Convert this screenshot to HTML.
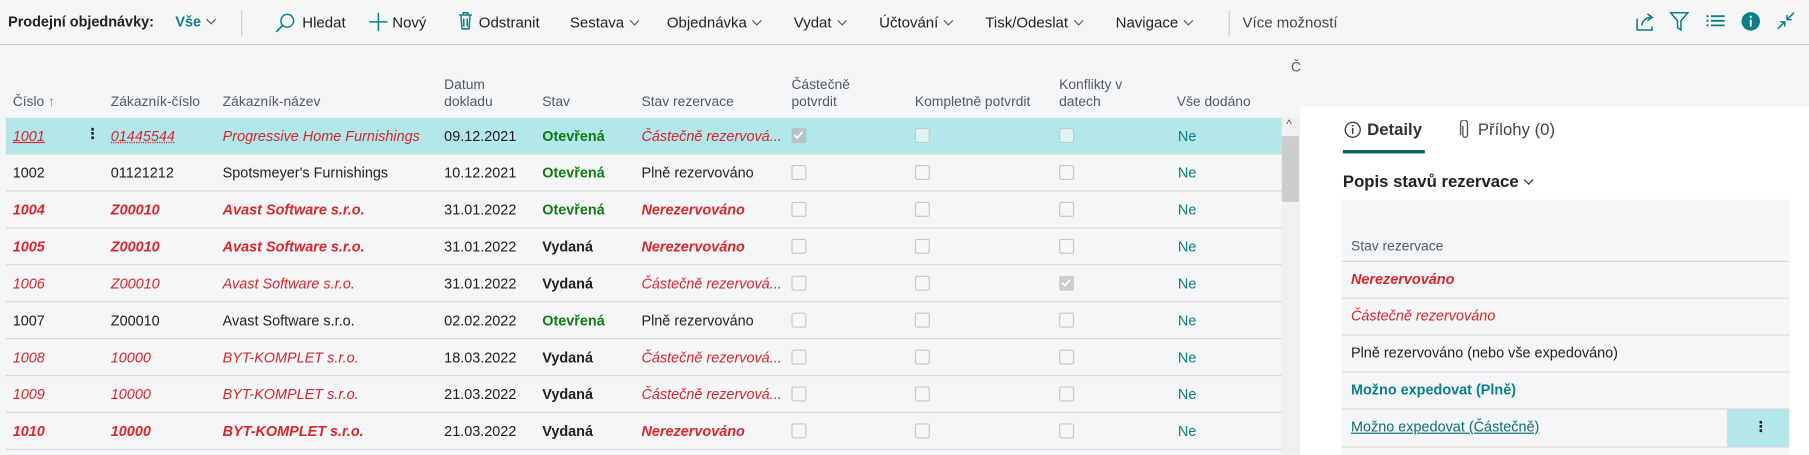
<!DOCTYPE html>
<html><head><meta charset="utf-8">
<style>
*{margin:0;padding:0;box-sizing:border-box}
html,body{width:1809px;height:455px;overflow:hidden;background:#f5f6f8}
#w{position:absolute;left:0;top:0;width:1568px;height:394px;transform:scale(1.15370);transform-origin:0 0;font-family:"Liberation Sans","DejaVu Sans",sans-serif;font-size:12.5px;color:#212121}
.a{position:absolute;white-space:nowrap}
.tb{font-size:13px;color:#212121}
.chev{display:inline-block;width:6px;height:6px;border-right:1px solid #555;border-bottom:1px solid #555;transform:rotate(45deg);margin-left:6px;position:relative;top:-3px}
.hd{font-size:12px;color:#505a66;line-height:15px}
.row{position:absolute;left:5px;width:1106px;height:32px;border-bottom:1px solid #d7dade}
.row .a{top:9px}
.cb{position:absolute;width:13px;height:13px;border:1.3px solid #c8c8c8;border-radius:2px;top:9px;background:#f7f7f7}
.r{color:#d9262c}
.i{font-style:italic}
.b{font-weight:bold}
.g{color:#107c10;font-weight:bold}
.ne{color:#0a7f86}
</style></head><body><div id="w">
<div class="a" style="left:0;top:0;width:1568px;height:39px;border-bottom:1px solid #c8ccd2;background:#f5f6f8"></div>
<div class="a tb b" style="left:7px;top:12px;font-size:12.5px">Prodejní objednávky:</div>
<div class="a tb" style="left:152px;top:12px;color:#0a7f86;font-weight:bold;font-size:12.5px">Vše<span class="chev"></span></div>
<div class="a" style="left:209px;top:9px;width:1px;height:22px;background:#c8ccd2"></div>
<svg class="a" style="left:238px;top:11px" width="18" height="18"><circle cx="11" cy="7" r="5.5" fill="none" stroke="#0a7f86" stroke-width="1.3"/><line x1="7" y1="11" x2="1.5" y2="16.5" stroke="#0a7f86" stroke-width="1.5"/></svg>
<div class="a tb" style="left:262px;top:12px">Hledat</div>
<svg class="a" style="left:320px;top:11px" width="16" height="16"><path d="M8 0v16M0 8h16" stroke="#0a7f86" stroke-width="1.3"/></svg>
<div class="a tb" style="left:340px;top:12px">Nový</div>
<svg class="a" style="left:397px;top:10px" width="13" height="16"><path d="M1 3h11M4.5 3V1h4v2M2.5 3l1 12h6l1-12M5 6v7M8 6v7" stroke="#0a7f86" stroke-width="1.3" fill="none"/></svg>
<div class="a tb" style="left:415px;top:12px">Odstranit</div>
<div class="a tb" style="left:494px;top:12px">Sestava<span class="chev"></span></div>
<div class="a tb" style="left:578px;top:12px">Objednávka<span class="chev"></span></div>
<div class="a tb" style="left:688px;top:12px">Vydat<span class="chev"></span></div>
<div class="a tb" style="left:762px;top:12px">Účtování<span class="chev"></span></div>
<div class="a tb" style="left:854px;top:12px">Tisk/Odeslat<span class="chev"></span></div>
<div class="a tb" style="left:967px;top:12px">Navigace<span class="chev"></span></div>
<div class="a" style="left:1065px;top:9px;width:1px;height:22px;background:#c8ccd2"></div>
<div class="a tb" style="left:1077px;top:12px;color:#444">Více možností</div>
<svg class="a" style="left:1417px;top:10px" width="18" height="18"><path d="M2 6v10h13v-3M6 12c1-5 4-7 9-7M11 2l4 3-4 3" stroke="#0a7f86" stroke-width="1.3" fill="none"/></svg>
<svg class="a" style="left:1447px;top:10px" width="17" height="18"><path d="M1 1h15l-6 7v8l-3-2V8z" stroke="#0a7f86" stroke-width="1.3" fill="none"/></svg>
<svg class="a" style="left:1479px;top:12px" width="16" height="14"><path d="M0 2h2M4 2h12M0 6h2M4 6h12M0 10h2M4 10h12" stroke="#0a7f86" stroke-width="1.6"/></svg>
<svg class="a" style="left:1509px;top:10px" width="17" height="17"><circle cx="8.5" cy="8.5" r="8" fill="#0a7f86"/><path d="M8.5 7v6" stroke="#fff" stroke-width="1.6"/><circle cx="8.5" cy="4.5" r="1" fill="#fff"/></svg>
<svg class="a" style="left:1540px;top:10px" width="16" height="16"><path d="M1 15l6-6M3 9h4v4M15 1l-6 6M9 3v4h4" stroke="#0a7f86" stroke-width="1.3" fill="none"/></svg>

<div class="a hd" style="left:11px;top:81px">Číslo <span style="color:#888">↑</span></div>
<div class="a hd" style="left:96px;top:81px">Zákazník-číslo</div>
<div class="a hd" style="left:193px;top:81px">Zákazník-název</div>
<div class="a hd" style="left:385px;top:66px">Datum<br>dokladu</div>
<div class="a hd" style="left:470px;top:81px">Stav</div>
<div class="a hd" style="left:556px;top:81px">Stav rezervace</div>
<div class="a hd" style="left:686px;top:66px">Částečně<br>potvrdit</div>
<div class="a hd" style="left:793px;top:81px">Kompletně potvrdit</div>
<div class="a hd" style="left:918px;top:66px">Konflikty v<br>datech</div>
<div class="a hd" style="left:1020px;top:81px">Vše dodáno</div>
<div class="a hd" style="left:1119px;top:51px">Č</div>

<div class="row" style="top:102px;background:#b2e8ea"><div class="a r i" style="left:6px;text-decoration:underline">1001</div><div class="a b" style="left:69px;top:6px">⋮</div><div class="a r i" style="left:91px;text-decoration:underline dotted">01445544</div><div class="a r i" style="left:188px">Progressive Home Furnishings</div><div class="a" style="left:380px">09.12.2021</div><div class="a g" style="left:465px">Otevřená</div><div class="a r i" style="left:551px">Částečně rezervová...</div><div class="cb" style="left:681px;background:#b8c4c6;border-color:#b8c4c6"><svg width="10" height="10" style="position:absolute;left:0;top:0"><path d="M1.5 5l2.5 2.5 4.5-5" stroke="#fff" stroke-width="1.5" fill="none"/></svg></div><div class="cb" style="left:788px;background:#ddf4f5"></div><div class="cb" style="left:913px;background:#ddf4f5"></div><div class="a ne" style="left:1016px">Ne</div></div>
<div class="row" style="top:134px"><div class="a" style="left:6px">1002</div><div class="a" style="left:91px">01121212</div><div class="a" style="left:188px">Spotsmeyer's Furnishings</div><div class="a" style="left:380px">10.12.2021</div><div class="a g" style="left:465px">Otevřená</div><div class="a" style="left:551px">Plně rezervováno</div><div class="cb" style="left:681px"></div><div class="cb" style="left:788px"></div><div class="cb" style="left:913px"></div><div class="a ne" style="left:1016px">Ne</div></div>
<div class="row" style="top:166px"><div class="a r i b" style="left:6px">1004</div><div class="a r i b" style="left:91px">Z00010</div><div class="a r i b" style="left:188px">Avast Software s.r.o.</div><div class="a" style="left:380px">31.01.2022</div><div class="a g" style="left:465px">Otevřená</div><div class="a r i b" style="left:551px">Nerezervováno</div><div class="cb" style="left:681px"></div><div class="cb" style="left:788px"></div><div class="cb" style="left:913px"></div><div class="a ne" style="left:1016px">Ne</div></div>
<div class="row" style="top:198px"><div class="a r i b" style="left:6px">1005</div><div class="a r i b" style="left:91px">Z00010</div><div class="a r i b" style="left:188px">Avast Software s.r.o.</div><div class="a" style="left:380px">31.01.2022</div><div class="a b" style="left:465px">Vydaná</div><div class="a r i b" style="left:551px">Nerezervováno</div><div class="cb" style="left:681px"></div><div class="cb" style="left:788px"></div><div class="cb" style="left:913px"></div><div class="a ne" style="left:1016px">Ne</div></div>
<div class="row" style="top:230px"><div class="a r i" style="left:6px">1006</div><div class="a r i" style="left:91px">Z00010</div><div class="a r i" style="left:188px">Avast Software s.r.o.</div><div class="a" style="left:380px">31.01.2022</div><div class="a b" style="left:465px">Vydaná</div><div class="a r i" style="left:551px">Částečně rezervová...</div><div class="cb" style="left:681px"></div><div class="cb" style="left:788px"></div><div class="cb" style="left:913px;background:#ccc;border-color:#ccc"><svg width="10" height="10" style="position:absolute;left:0;top:0"><path d="M1.5 5l2.5 2.5 4.5-5" stroke="#fff" stroke-width="1.5" fill="none"/></svg></div><div class="a ne" style="left:1016px">Ne</div></div>
<div class="row" style="top:262px"><div class="a" style="left:6px">1007</div><div class="a" style="left:91px">Z00010</div><div class="a" style="left:188px">Avast Software s.r.o.</div><div class="a" style="left:380px">02.02.2022</div><div class="a g" style="left:465px">Otevřená</div><div class="a" style="left:551px">Plně rezervováno</div><div class="cb" style="left:681px"></div><div class="cb" style="left:788px"></div><div class="cb" style="left:913px"></div><div class="a ne" style="left:1016px">Ne</div></div>
<div class="row" style="top:294px"><div class="a r i" style="left:6px">1008</div><div class="a r i" style="left:91px">10000</div><div class="a r i" style="left:188px">BYT-KOMPLET s.r.o.</div><div class="a" style="left:380px">18.03.2022</div><div class="a b" style="left:465px">Vydaná</div><div class="a r i" style="left:551px">Částečně rezervová...</div><div class="cb" style="left:681px"></div><div class="cb" style="left:788px"></div><div class="cb" style="left:913px"></div><div class="a ne" style="left:1016px">Ne</div></div>
<div class="row" style="top:326px"><div class="a r i" style="left:6px">1009</div><div class="a r i" style="left:91px">10000</div><div class="a r i" style="left:188px">BYT-KOMPLET s.r.o.</div><div class="a" style="left:380px">21.03.2022</div><div class="a b" style="left:465px">Vydaná</div><div class="a r i" style="left:551px">Částečně rezervová...</div><div class="cb" style="left:681px"></div><div class="cb" style="left:788px"></div><div class="cb" style="left:913px"></div><div class="a ne" style="left:1016px">Ne</div></div>
<div class="row" style="top:358px"><div class="a r i b" style="left:6px">1010</div><div class="a r i b" style="left:91px">10000</div><div class="a r i b" style="left:188px">BYT-KOMPLET s.r.o.</div><div class="a" style="left:380px">21.03.2022</div><div class="a b" style="left:465px">Vydaná</div><div class="a r i b" style="left:551px">Nerezervováno</div><div class="cb" style="left:681px"></div><div class="cb" style="left:788px"></div><div class="cb" style="left:913px"></div><div class="a ne" style="left:1016px">Ne</div></div>

<div class="a" style="left:1111px;top:102px;width:15px;height:292px;background:#f0f0f0"></div>
<div class="a" style="left:1111px;top:118px;width:15px;height:57px;background:#cdcdcd"></div>
<div class="a" style="left:1115px;top:103px;font-size:10px;color:#555">^</div>

<div class="a" style="left:1127px;top:92px;width:441px;height:302px;background:#fff"></div>
<svg class="a" style="left:1165px;top:105px" width="15" height="15"><circle cx="7.5" cy="7.5" r="6.5" fill="none" stroke="#333" stroke-width="1.1"/><path d="M7.5 6v5" stroke="#333" stroke-width="1.2"/><circle cx="7.5" cy="4" r=".8" fill="#333"/></svg>
<div class="a b" style="left:1185px;top:105px;font-size:14.5px;color:#333">Detaily</div>
<div class="a" style="left:1164px;top:130px;width:71px;height:3px;background:#0a6268"></div>
<svg class="a" style="left:1265px;top:104px" width="10" height="17"><path d="M3 5v8a2 2 0 0 0 4 0V3a3 3 0 0 0-6 0v10" stroke="#555" stroke-width="1.2" fill="none"/></svg>
<div class="a" style="left:1281px;top:105px;font-size:14.5px;color:#444">Přílohy (0)</div>
<div class="a b" style="left:1164px;top:150px;font-size:14.5px;color:#222">Popis stavů rezervace<span class="chev" style="border-color:#333"></span></div>
<div class="a" style="left:1163px;top:173px;width:388px;height:221px;background:#f5f6f8"></div>
<div class="a hd" style="left:1171px;top:206px">Stav rezervace</div>
<div class="a" style="left:1163px;top:226px;width:388px;height:1px;background:#d7dade"></div>
<div class="a r i b" style="left:1171px;top:235px">Nerezervováno</div>
<div class="a" style="left:1163px;top:258px;width:388px;height:1px;background:#d7dade"></div>
<div class="a r i" style="left:1171px;top:267px">Částečně rezervováno</div>
<div class="a" style="left:1163px;top:290px;width:388px;height:1px;background:#d7dade"></div>
<div class="a" style="left:1171px;top:299px">Plně rezervováno (nebo vše expedováno)</div>
<div class="a" style="left:1163px;top:322px;width:388px;height:1px;background:#d7dade"></div>
<div class="a b" style="left:1171px;top:331px;color:#0a7f86">Možno expedovat (Plně)</div>
<div class="a" style="left:1163px;top:354px;width:388px;height:1px;background:#d7dade"></div>
<div class="a" style="left:1171px;top:363px;color:#0a6f76;text-decoration:underline">Možno expedovat (Částečně)</div>
<div class="a" style="left:1497px;top:355px;width:54px;height:32px;background:#b2e8ea"></div>
<div class="a b" style="left:1520px;top:362px">⋮</div>
<div class="a" style="left:1163px;top:387px;width:388px;height:1px;background:#d7dade"></div>
</div></body></html>
